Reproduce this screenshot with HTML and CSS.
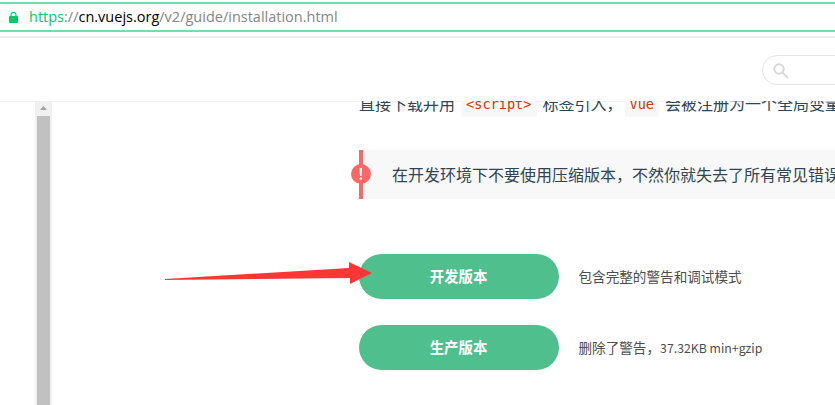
FILE: index.html
```html
<!DOCTYPE html>
<html lang="zh-CN">
<head>
<meta charset="utf-8">
<title>安装 — Vue.js</title>
<link rel="stylesheet" href="styles.css">
</head>
<body>
<div class="address">
  <svg class="lock" width="9" height="11" viewBox="0 0 9 11"><path d="M2 5V3a2.5 2.5 0 0 1 5 0v2" fill="none" stroke="#0c6" stroke-width="1.2"/><rect y="4" width="9" height="7" rx="1" fill="#0c6"/></svg>
  <div class="url"><span class="scheme">https</span>://<span class="host">cn.vuejs.org</span>/v2/guide/installation.html</div>
</div>
<header class="header">
  <div class="search"><svg width="16" height="16" viewBox="0 0 16 16" fill="none" stroke="#d8d8d8" stroke-width="2"><circle cx="6" cy="6" r="4.7"/><path d="M9.5 9.5L15 15"/></svg></div>
</header>
<main class="main">
  <div class="scrollbar">
    <svg width="17" height="15" viewBox="0 0 17 15"><path d="M5 9L8.5 5L12 9Z" fill="#a3a3a3"/></svg>
    <div class="thumb"></div>
  </div>
  <article class="content">
    <p class="intro"><span>直接下载并用</span><code>&lt;script&gt;</code><span class="middle">标签引入，</span><code>Vue</code><span>会被注册为一个全局变量</span></p>
    <div class="tip">在开发环境下不要使用压缩版本，不然你就失去了所有常见错误<span class="badge"><svg width="20" height="20" viewBox="0 0 20 20"><circle cx="10" cy="10" r="10" fill="#f66"/><path d="M8.6 4h2.4l-.4 8H9z" fill="#fff"/><circle cx="9.8" cy="14.6" r="1.25" fill="#fff"/></svg></span></div>
    <div class="download"><a class="button">开发版本</a><span>包含完整的警告和调试模式</span></div>
    <div class="download"><a class="button">生产版本</a><span>删除了警告，<span class="size">37.32KB min+gzip</span></span></div>
  </article>
</main>
<svg class="arrow" width="208" height="24" viewBox="0 0 208 24"><path d="M0 17L184 6V0L207 11L185 22V16L0 18Z" fill="#fc3535"/></svg>
</body>
</html>
```
FILE: styles.css
```css
* { box-sizing: border-box; }
body {
  margin: 0;
  height: 405px;
  overflow: hidden;
  position: relative;
  display: flex;
  flex-direction: column;
  background: #fff;
  color: #304455;
  font-family: "Noto Sans CJK SC", sans-serif;
  font-size: 16px;
}
.address {
  flex: none;
  display: flex;
  align-items: center;
  height: 30px;
  margin-top: 2px;
  padding-left: 9px;
  border-top: 2px solid #70dfa8;
  border-bottom: 2px solid #70dfa8;
}
.url {
  margin-left: 11px;
  color: #858585;
  font: 14.5px/20px "Open Sans", sans-serif;
  white-space: nowrap;
}
.scheme { color: #0c6; }
.host { color: #000; }
.header {
  flex: none;
  height: 66px;
  margin-top: 4px;
  padding: 17px 0 0 762px;
  border-top: 2px solid #eee;
  border-bottom: 1px solid #f3f3f3;
  overflow: hidden;
}
.search {
  width: 183px;
  height: 30px;
  padding: 7px 10px;
  border: 1px solid #e3e3e3;
  border-radius: 15px;
}
.search svg { display: block; }
.main {
  flex: 1;
  min-height: 0;
  display: flex;
  margin-top: -1px;
  overflow: hidden;
}
.scrollbar {
  flex: none;
  display: flex;
  flex-direction: column;
  width: 17px;
  margin-left: 35px;
  background: #f1f1f1;
}
.scrollbar svg { flex: none; }
.thumb {
  flex: 1;
  margin: 0 2px;
  background: #c1c1c1;
}
.content {
  flex: none;
  width: 500px;
  margin-left: 307px;
}
.intro {
  display: flex;
  height: 25px;
  margin: -9px 0 0;
  line-height: 23px;
  white-space: nowrap;
}
code {
  height: 25px;
  margin: 0 6px;
  padding: 0 5px;
  border-radius: 2px;
  background: #f8f8f8;
  color: #d63200;
  font: 13.6px/25px "DejaVu Sans Mono", monospace;
}
.middle { width: 76px; }
.tip {
  position: relative;
  height: 49px;
  margin: 33px 0 55px;
  padding-left: 29px;
  border-left: 4px solid #f66;
  background: #f8f8f8;
  line-height: 48px;
  white-space: nowrap;
}
.badge {
  position: absolute;
  top: 14px;
  left: -12px;
  display: flex;
}
.download {
  display: flex;
  height: 45px;
  margin-bottom: 26px;
  font-size: 13.6px;
  line-height: 45px;
  color: #4e4e4e;
  white-space: nowrap;
}
.size { font-size: 12.3px; }
.button {
  width: 200px;
  height: 45px;
  margin-right: 19.5px;
  padding-right: 1px;
  border-radius: 23px;
  background: #4fc08d;
  color: #fff;
  font-size: 14.4px;
  font-weight: 700;
  line-height: 44px;
  text-align: center;
}
.arrow {
  position: absolute;
  left: 165px;
  top: 262px;
}
```
